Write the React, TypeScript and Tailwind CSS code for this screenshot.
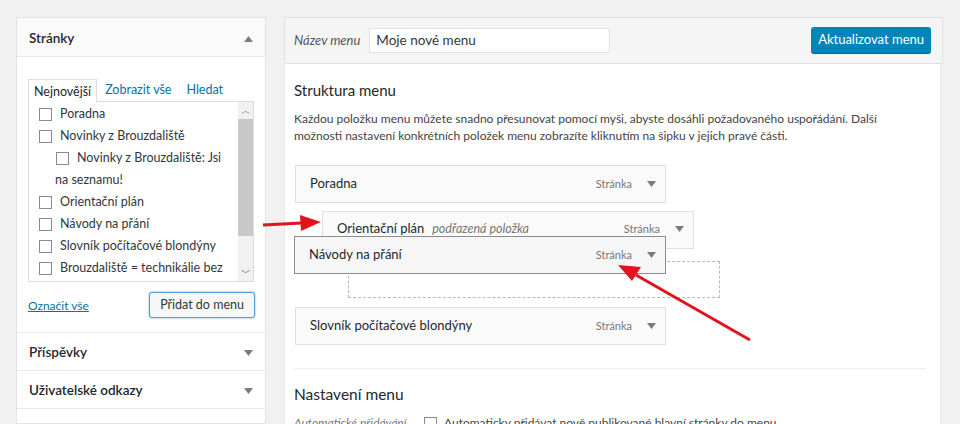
const font = { fontFamily: 'Lato, "Noto Sans", sans-serif' };

const Caret = ({ up = false }: { up?: boolean }) => (
  <svg width="9" height="6" viewBox="0 0 9 6" className="shrink-0">
    <polygon points={up ? "0,6 9,6 4.5,0" : "0,0 9,0 4.5,6"} fill="#7b7b7b" />
  </svg>
);

const Box = () => (
  <span className="inline-block w-[13px] h-[13px] shrink-0 border border-[#8a8a8a] bg-white" />
);

const pages = [
  { label: "Poradna" },
  { label: "Novinky z Brouzdaliště" },
  { label: "Novinky z Brouzdaliště: Jsi", child: true },
  { label: "na seznamu!", wrap: true },
  { label: "Orientační plán" },
  { label: "Návody na přání" },
  { label: "Slovník počítačové blondýny" },
  { label: "Brouzdaliště = technikálie bez" },
];

const MenuItem = ({
  title,
  note,
  className,
}: {
  title: string;
  note?: string;
  className: string;
}) => (
  <div className={`flex items-center h-[38px] pl-[14px] pr-[9px] text-[13px] ${className}`}>
    <span className="text-[#23282d]">{title}</span>
    {note && <span className="ml-[8px] italic text-[#777] text-[12.5px]">{note}</span>}
    <span className="ml-auto mr-[15px] text-[11px] text-[#777]">Stránka</span>
    <Caret />
  </div>
);

export default function App() {
  return (
    <div
      className="relative flex gap-[18px] h-[424px] w-[960px] overflow-hidden bg-[#f1f1f1] pt-[17px] pl-[16px]"
      style={font}
    >
      {/* levý sloupec */}
      <div className="w-[250px] shrink-0 flex flex-col bg-white border border-[#e3e3e3]">
        <div className="flex items-center justify-between h-[39px] shrink-0 px-[12px] pt-[3px] bg-[#fafafa] border-b border-[#e8e8e8]">
          <span className="text-[13.5px] font-semibold text-[#23282d]">Stránky</span>
          <Caret up />
        </div>

        <div className="px-[11px] pt-[21px]">
          <div className="flex items-end text-[12.5px] h-[23px]">
            <span className="h-[23px] px-[5px] pt-[3px] border border-b-0 border-[#ddd] bg-white text-[#23282d] relative top-[1px]">
              Nejnovější
            </span>
            <span className="ml-[8px] pb-[1px] text-[#0073aa]">Zobrazit vše</span>
            <span className="ml-[15px] pb-[1px] text-[#0073aa]">Hledat</span>
          </div>

          <div className="flex h-[181px] border border-[#ddd] bg-white">
            <div className="flex-1 pl-[10px] pt-[1px] text-[12.5px] text-[#32373c]">
              {pages.map((p) =>
                p.wrap ? (
                  <div key={p.label} className="h-[22px] flex items-center pl-[16px]">
                    {p.label}
                  </div>
                ) : (
                  <div
                    key={p.label}
                    className={`h-[22px] flex items-center gap-[8px] whitespace-nowrap ${p.child ? "pl-[17px]" : ""}`}
                  >
                    <Box />
                    <span>{p.label}</span>
                  </div>
                )
              )}
            </div>
            <div className="w-[15px] flex flex-col items-center bg-[#f1f1f1]">
              <span className="h-[17px] text-[10px] leading-[17px] text-[#505050]">︿</span>
              <div className="w-full h-[117px] bg-[#c8c8c8]" />
              <div className="flex-1" />
              <span className="h-[17px] text-[10px] leading-[17px] text-[#505050]">﹀</span>
            </div>
          </div>

          <div className="flex items-center justify-between mt-[10px] h-[26px]">
            <span className="text-[12px] text-[#0073aa] underline pt-[1px]">Označit vše</span>
            <span className="h-[26px] px-[10px] flex items-center text-[12.5px] text-[#32373c] bg-[#f7f7f7] border border-[#5b9dd9] rounded-[3px] shadow-[0_0_2px_rgba(30,140,190,0.8)] mr-[-1px]">
              Přidat do menu
            </span>
          </div>
        </div>

        <div className="mt-[14px] border-t border-[#e8e8e8]" />
        <div className="flex items-center justify-between h-[38px] shrink-0 px-[12px] pt-[2px] border-b border-[#e8e8e8]">
          <span className="text-[13.5px] font-semibold text-[#23282d]">Příspěvky</span>
          <Caret />
        </div>
        <div className="flex items-center justify-between h-[38px] shrink-0 px-[12px] pt-[2px] border-b border-[#e8e8e8]">
          <span className="text-[13.5px] font-semibold text-[#23282d]">Uživatelské odkazy</span>
          <Caret />
        </div>
      </div>

      {/* pravý sloupec */}
      <div className="w-[659px] shrink-0 flex flex-col">
        <div className="flex items-center h-[47px] shrink-0 pl-[9px] pr-[11px] bg-[#f5f5f5] border border-[#e3e3e3]">
          <span className="italic text-[13px] text-[#555]">Název menu</span>
          <span className="ml-[9px] w-[241px] h-[25px] flex items-center px-[6px] bg-white border border-[#e2e2e2] text-[13.5px] text-[#32373c]">
            Moje nové menu
          </span>
          <span className="ml-auto h-[27px] px-[7px] flex items-center rounded-[3px] bg-[#0085ba] text-white text-[13px] border-b border-[#006799]">
            Aktualizovat menu
          </span>
        </div>

        <div className="relative w-[657px] flex-1 bg-white border-x border-[#e8e8e8] pl-[9px] pr-[14px]">
          <h2 className="mt-[16px] text-[15px] text-[#23282d] leading-[20px]">Struktura menu</h2>
          <p className="mt-[10px] text-[12px] leading-[17px] text-[#444] whitespace-nowrap">
            Každou položku menu můžete snadno přesunovat pomocí myši, abyste dosáhli požadovaného uspořádání. Další
            <br />
            možnosti nastavení konkrétních položek menu zobrazíte kliknutím na šipku v jejich pravé části.
          </p>

          <div className="relative mt-[21px] pl-[1px]">
            <MenuItem title="Poradna" className="w-[371px] bg-[#fafafa] border border-[#dfdfdf]" />
            <MenuItem
              title="Orientační plán"
              note="podřazená položka"
              className="mt-[8px] ml-[27px] w-[372px] h-[37px] bg-[#fafafa] border border-[#dfdfdf] pb-[2px]"
            />
            <div className="mt-[12px] ml-[53px] w-[372px] h-[37px] border border-dashed border-[#b8b8b8]" />
            <MenuItem title="Slovník počítačové blondýny" className="mt-[9px] w-[371px] bg-[#fafafa] border border-[#dfdfdf]" />

            {/* přetahovaná položka */}
            <MenuItem
              title="Návody na přání"
              className="absolute left-0 top-[71px] w-[372px] h-[38px] bg-[#f6f6f6] border border-[#8c8c8c]"
            />
          </div>

          <div className="mt-[23px] border-t border-[#eee]" />
          <h2 className="mt-[15px] text-[15.5px] text-[#23282d] leading-[20px]">Nastavení menu</h2>
          <div className="mt-[10px] flex items-center text-[12px] whitespace-nowrap">
            <span className="italic text-[#777] w-[130px]">Automatické přidávání</span>
            <Box />
            <span className="ml-[7px] text-[#444]">Automaticky přidávat nově publikované hlavní stránky do menu</span>
          </div>
        </div>
      </div>

      {/* červené šipky */}
      <svg className="absolute left-0 top-0 pointer-events-none" width="960" height="424">
        <line x1="263" y1="225" x2="302" y2="223" stroke="#e0141b" strokeWidth="3" />
        <polygon points="300,215 321,222 301,231" fill="#e0141b" />
        <line x1="750" y1="340" x2="636" y2="275" stroke="#e0141b" strokeWidth="3" />
        <polygon points="618,265 641,267 632,281" fill="#e0141b" />
      </svg>
    </div>
  );
}
